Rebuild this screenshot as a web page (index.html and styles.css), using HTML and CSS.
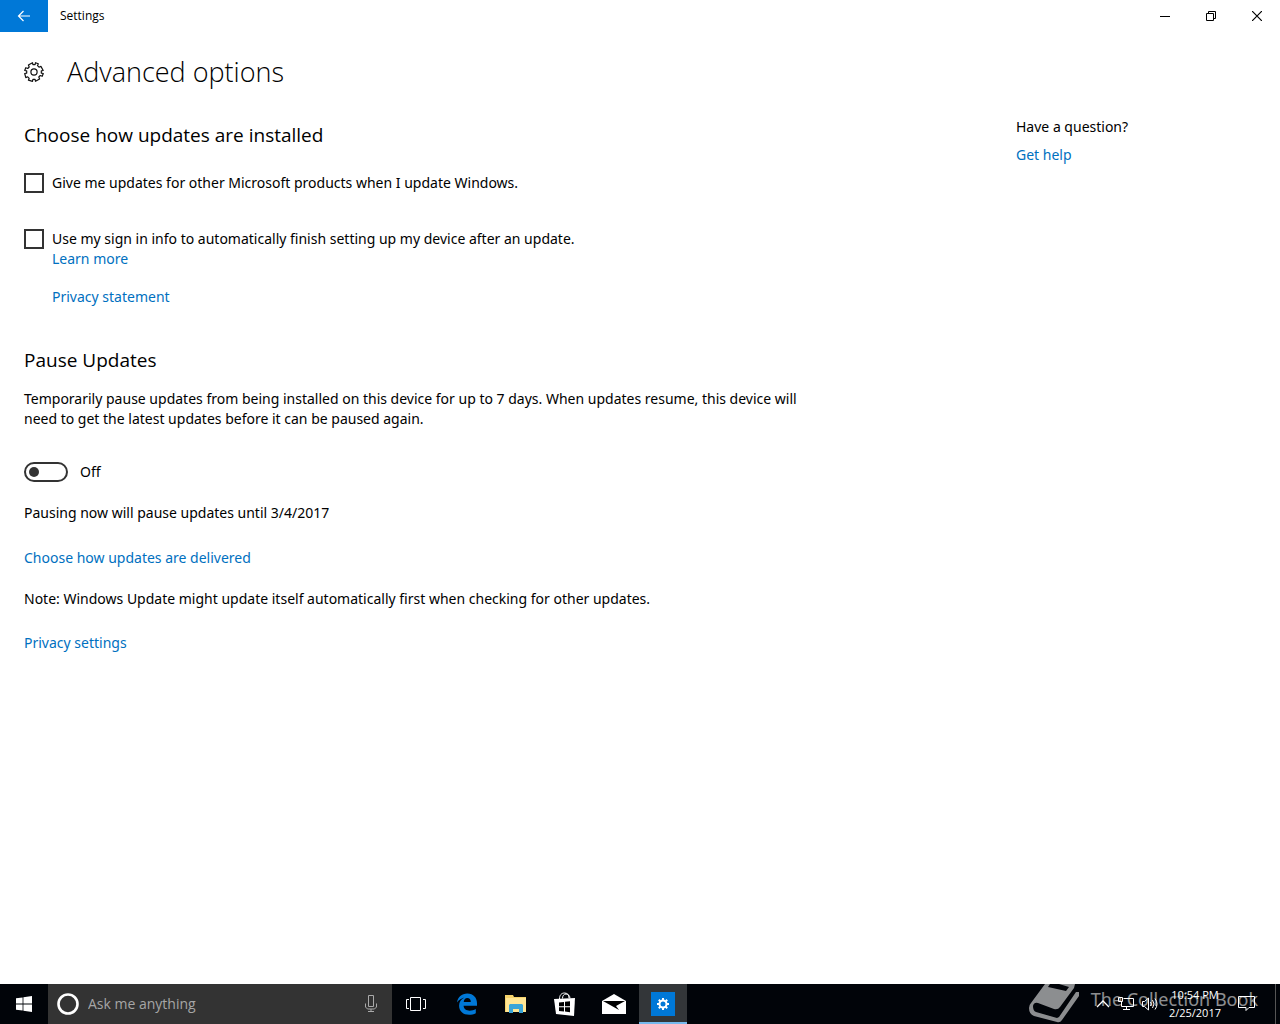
FILE: index.html
```
<!DOCTYPE html>
<html lang="en">
<head>
    <meta charset="UTF-8">
    <meta name="viewport" content="width=device-width, initial-scale=1.0">
    <title>Settings</title>
    <link rel="stylesheet" href="styles.css">
</head>
<body>

<header class="titlebar">
    <button class="back" type="button" aria-label="Back">
        <svg width="14" height="12" viewBox="0 0 14 12"><path d="M13 6H1.5M6.5 1L1.5 6l5 5" fill="none" stroke="#fff" stroke-width="1.2"/></svg>
    </button>
    <span class="app-name">Settings</span>
    <div class="window-buttons">
        <button type="button" aria-label="Minimize">
            <svg width="10" height="10" viewBox="0 0 10 10"><path d="M0 5.5h10" stroke="#000"/></svg>
        </button>
        <button type="button" aria-label="Restore">
            <svg width="10" height="10" viewBox="0 0 10 10"><path d="M.5 2.5h7v7h-7zM2.5 2.5v-2h7v7h-2" fill="none" stroke="#000"/></svg>
        </button>
        <button type="button" aria-label="Close">
            <svg width="10" height="10" viewBox="0 0 10 10"><path d="M0 0l10 10M10 0L0 10" stroke="#000" stroke-width="1.2"/></svg>
        </button>
    </div>
</header>

<main class="page">
    <div class="page-title">
        <svg width="20" height="20" viewBox="0 0 20 20" fill="none" stroke="#111" stroke-width="1.2" stroke-linejoin="round">
            <path d="M8.500.7L8.900 2.700H11.100L11.500.7L14.300 1.800L13.500 3.700L15 5.200L16.900 4.400L19.200 8.500L17.300 8.900V11.100L19.300 11.500L18.200 14.300L16.300 13.500L14.800 15L15.600 16.900L11.500 19.300L11.100 17.300H8.900L8.500 19.300L4.400 18.200L5.200 16.300L3.700 14.800L1.800 15.600L.7 11.500L2.700 11.100V8.900L.7 8.500L1.800 5.700L3.700 6.500L5.200 5L4.400 3.100z"/>
            <circle cx="10" cy="10" r="3.100"/>
        </svg>
        <h1>Advanced options</h1>
    </div>

    <div class="columns">
        <div class="content">
            <section class="install">
                <h2>Choose how updates are installed</h2>
                <label class="check"><input type="checkbox">Give me updates for other Microsoft products when I update Windows.</label>
                <label class="check"><input type="checkbox">Use my sign in info to automatically finish setting up my device after an update.</label>
                <div class="sub-links">
                    <a href="#">Learn more</a>
                    <a href="#">Privacy statement</a>
                </div>
            </section>

            <section class="pause">
                <h2>Pause Updates</h2>
                <p class="about">Temporarily pause updates from being installed on this device for up to 7 days. When updates resume, this device will need to get the latest updates before it can be paused again.</p>
                <label class="toggle"><input type="checkbox" role="switch">Off</label>
                <p>Pausing now will pause updates until 3/4/2017</p>
                <p class="delivery"><a href="#">Choose how updates are delivered</a></p>
                <p class="note">Note: Windows Update might update itself automatically first when checking for other updates.</p>
                <p class="privacy"><a href="#">Privacy settings</a></p>
            </section>
        </div>

        <aside class="help">
            <p>Have a question?</p>
            <a href="#">Get help</a>
        </aside>
    </div>
</main>

<footer class="taskbar">
    <button class="start" type="button" aria-label="Start">
        <svg width="16" height="16" viewBox="0 0 16 16" fill="#fff"><path d="M0 2.300L6.600 1.400v6.200H0zM7.400 1.300L16 0v7.600H7.400zM0 8.400h6.600v6.200L0 13.700zM7.400 8.400H16V16l-8.600-1.300z"/></svg>
    </button>
    <div class="search">
        <svg width="24" height="24" viewBox="0 0 24 24"><circle cx="12" cy="12" r="9.500" fill="none" stroke="#fff" stroke-width="2.600"/></svg>
        <input type="text" placeholder="Ask me anything" aria-label="Ask me anything">
        <button class="mic" type="button" aria-label="Speak">
            <svg width="12" height="18" viewBox="0 0 12 18" fill="none" stroke="#aaa"><path d="M3.500.5h5v11h-5zM.5 8.500V12l2 2h7l2-2V8.500M6 14v3M3 16.500h6"/></svg>
        </button>
    </div>
    <button class="task task-view" type="button" aria-label="Task View">
        <svg width="20" height="14" viewBox="0 0 20 14" fill="none" stroke="#fff"><path d="M4.500.5h10v13h-10zM3 2.500H.5v9H3M17 2.500h2.500v9H17"/></svg>
    </button>
    <button class="task" type="button" aria-label="Edge">
        <svg width="20" height="22" viewBox="0 0 20 22"><path fill="#0078d7" d="M0 9.600C.8 4 4.600.5 10.300.5 16.600.5 20 5 20 10.300v2.500H6.600c.2 3.400 2.900 4.900 6 4.900 2.300 0 4.300-.6 6.200-1.700v4.300c-2 1-4.200 1.500-6.700 1.500-5.900 0-10-3.400-10-9 0-3.800 2-6.600 5.300-8.200C4.600 5.300 2.100 6.600 0 9.600zm6.700-.7h7.100c0-2.700-1.300-4-3.500-4-1.900 0-3.300 1.600-3.600 4z"/></svg>
    </button>
    <button class="task" type="button" aria-label="File Explorer">
        <svg width="22" height="18" viewBox="0 0 22 18"><path d="M0 0h8l1 2h12v15H0z" fill="#f5d36b"/><path d="M1 3h20v14H1z" fill="#ffe694"/><path d="M4 18v-8l1-1h12l1 1v8h-4v-4H8v4z" fill="#3aa5d8"/></svg>
    </button>
    <button class="task" type="button" aria-label="Store">
        <svg width="22" height="24" viewBox="0 0 22 24"><path d="M5.500 7c0-4 2-6 5-6 3 0 4.500 2 4.500 5M8.500 6.500c0-3 1.500-4.500 3.500-4.500s4 1.500 4 4.500" fill="none" stroke="#fff"/><path d="M0 7l21-1-1 18-18-2z" fill="#fff"/><path d="M5 10.500l5-.6v4.300H5zM11 9.800l5-.6v5h-5zM5 15.200h5v4.300l-5-.6zM11 15.200h5v5l-5-.6z" fill="#000"/></svg>
    </button>
    <button class="task" type="button" aria-label="Mail">
        <svg width="24" height="20" viewBox="0 0 24 20"><path d="M0 7L12 0l12 7v13H0z" fill="#fff"/><path d="M1 7h22l-9 5 3 4z" fill="#000"/></svg>
    </button>
    <button class="task active" type="button" aria-label="Settings">
        <svg width="24" height="24" viewBox="0 0 24 24"><path fill="#0078d7" d="M0 0h24v24H0z"/><circle cx="12" cy="12" r="3.500" fill="none" stroke="#fff" stroke-width="2"/><path d="M12 6v2M12 16v2M6 12h2M16 12h2M7.800 7.800l1.400 1.400M14.800 14.800l1.400 1.400M7.800 16.200l1.400-1.400M14.800 9.200l1.400-1.400" stroke="#fff" stroke-width="2"/></svg>
    </button>

    <div class="tray">
        <button type="button" aria-label="Show hidden icons">
            <svg width="14" height="8" viewBox="0 0 14 8"><path d="M1 7l6-6 6 6" fill="none" stroke="#fff" stroke-width="1.300"/></svg>
        </button>
        <button type="button" aria-label="Network">
            <svg width="16" height="14" viewBox="0 0 16 14" fill="none" stroke="#fff"><path d="M5.500 1.500h10v8H3.500V5M.5.500h4v4h-4zM8.500 9.500v3M5 12.500h7"/></svg>
        </button>
        <button type="button" aria-label="Volume">
            <svg width="17" height="14" viewBox="0 0 17 14" fill="none" stroke="#fff"><path d="M.5 4.500h2l4-3.500v12l-4-3.500h-2zM8.500 5q1.500 2 0 4M10.500 3q3 4 0 8M13 1.500q4 5.500 0 11"/></svg>
        </button>
        <div class="clock"><span>10:54 PM</span><span>2/25/2017</span></div>
        <button class="action" type="button" aria-label="Action Center">
            <svg width="17" height="16" viewBox="0 0 17 16" fill="none" stroke="#fff"><path d="M.5.500h16v11H11l-3 3v-3H.5z"/></svg>
        </button>
    </div>
    <button class="show-desktop" type="button" aria-label="Show desktop"></button>

    <div class="watermark">
        <svg width="52" height="40" viewBox="0 0 52 40">
            <path d="M16 0h5l-2 3 18 4 3-4-10-3h16l-1 4-14 19q-2 3-6 2L9 19q-4-1-5 3 0 5 3 6l21 6 2-1L47 8l3 0v4L33 36q-2 3-5 2L5 32q-5-2-5-8 0-3 2-5z" fill="#fff"/>
        </svg>
        <span>The Collection Book</span>
    </div>
</footer>

</body>
</html>
```
FILE: styles.css
```
* {
    box-sizing: border-box;
}
body {
    margin: 0;
    min-height: 100vh;
    display: flex;
    flex-direction: column;
    background-color: #fff;
    color: #000;
    font-family: "Noto Sans", "Open Sans", sans-serif;
    font-size: 14px;
    line-height: 20px;
}
h1, h2, p {
    margin: 0;
}
a {
    color: #0070c0;
    text-decoration: none;
}
button {
    display: flex;
    align-items: center;
    justify-content: center;
    padding: 0;
    border: none;
    background: none;
}
svg {
    display: block;
    flex-shrink: 0;
}
.titlebar {
    display: flex;
    align-items: center;
    height: 32px;
    font-family: "Open Sans", sans-serif;
}
.back {
    width: 48px;
    height: 32px;
    background-color: #0078d7;
}
.app-name {
    margin-left: 12px;
    font-size: 12px;
}
.window-buttons {
    display: flex;
    margin-left: auto;
}
.window-buttons button {
    width: 46px;
    height: 32px;
}
.page {
    flex: 1;
    padding: 20px 24px;
}
.page-title {
    display: flex;
    align-items: center;
    gap: 23px;
}
h1, h2 {
    font-family: "Open Sans", sans-serif;
}
h1 {
    font-size: 27px;
    font-weight: 300;
    line-height: 40px;
}
h2 {
    font-size: 19px;
    font-weight: 400;
    line-height: 26px;
}
.columns {
    display: flex;
    justify-content: space-between;
    padding-top: 25px;
}
.content {
    max-width: 800px;
}
.help {
    width: 240px;
}
.help a {
    display: block;
    margin-top: 8px;
}
.install h2 {
    padding-top: 5px;
}
.check {
    display: flex;
    align-items: center;
    gap: 8px;
    margin-top: 25px;
}
.check + .check {
    margin-top: 36px;
}
.check input {
    appearance: none;
    width: 20px;
    height: 20px;
    margin: 0;
    border: 2px solid #333;
}
.sub-links {
    display: flex;
    flex-direction: column;
    align-items: flex-start;
    gap: 18px;
    margin-left: 28px;
}
.pause {
    margin-top: 40px;
}
.about {
    margin-top: 16px;
}
.toggle {
    display: flex;
    align-items: center;
    gap: 12px;
    margin: 33px 0 21px;
}
.toggle input {
    appearance: none;
    display: flex;
    align-items: center;
    width: 44px;
    height: 20px;
    margin: 0;
    padding-left: 3px;
    border: 2px solid #333;
    border-radius: 10px;
}
.toggle input::before {
    content: "";
    width: 10px;
    height: 10px;
    border-radius: 5px;
    background-color: #333;
}
.delivery {
    margin-top: 25px;
}
.note {
    margin-top: 21px;
}
.privacy {
    margin-top: 24px;
}
.taskbar {
    position: relative;
    display: flex;
    height: 40px;
    background-color: #010409;
    font-family: "Open Sans", sans-serif;
    overflow: hidden;
}
.start, .task {
    width: 48px;
    height: 40px;
}
.task {
    margin-right: 1px;
}
.task-view {
    margin-right: 3px;
}
.active {
    background-color: #333639;
    border-top: 2px solid #333639;
    border-bottom: 2px solid #76b9ed;
}
.search {
    display: flex;
    align-items: center;
    width: 344px;
    padding: 0 15px 0 8px;
    background-color: #333;
}
.search input {
    flex: 1;
    min-width: 0;
    margin-left: 8px;
    padding: 0;
    border: none;
    background: none;
    color: #fff;
    font: inherit;
}
.search input::placeholder {
    color: #a6a6a6;
}
.tray {
    display: flex;
    align-items: center;
    gap: 8px;
    margin-left: auto;
    padding-right: 20px;
    color: #fff;
}
.clock {
    display: flex;
    flex-direction: column;
    align-items: center;
    margin-left: 2px;
    font-size: 11px;
    line-height: 18px;
}
.action {
    margin-left: 9px;
}
.show-desktop {
    width: 5px;
    border-left: 1px solid #555;
}
/* watermark lies over the tray */
.watermark {
    position: absolute;
    right: 22px;
    top: 0;
    display: flex;
    gap: 10px;
    color: #fff;
    font-family: "Noto Sans", sans-serif;
    font-size: 18px;
    line-height: 30px;
    opacity: 0.55;
    pointer-events: none;
}
```
